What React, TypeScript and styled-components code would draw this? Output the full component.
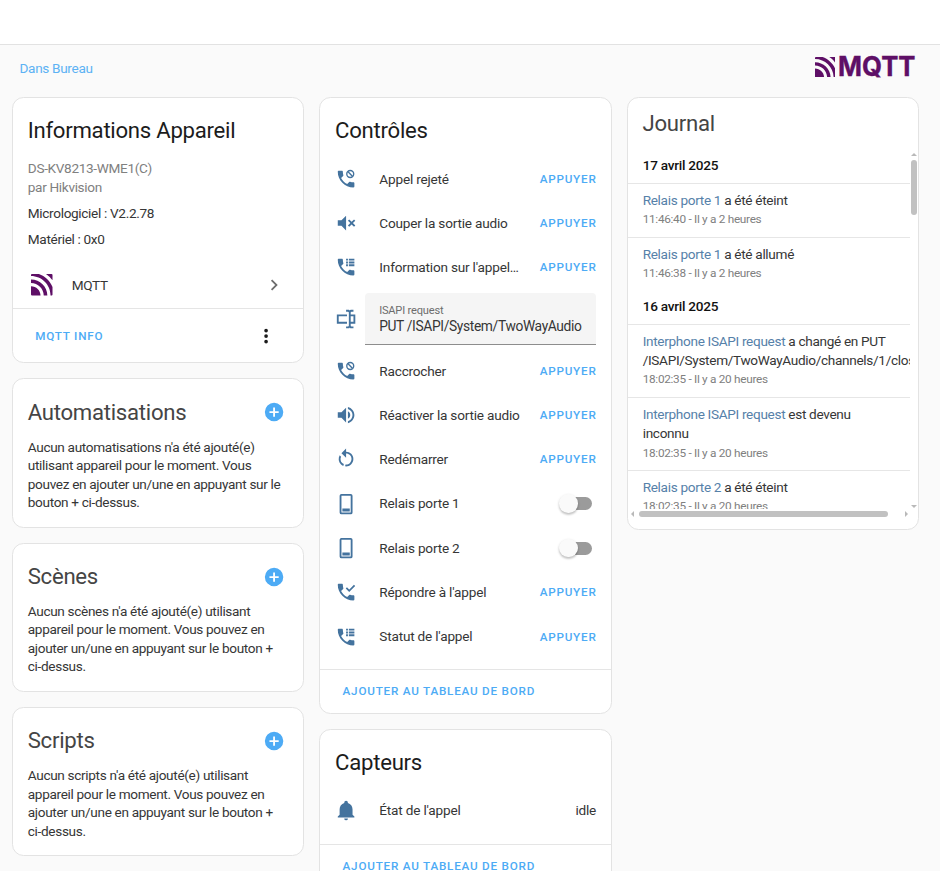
import React from "react";
import styled, { createGlobalStyle } from "styled-components";
import { SiMqtt } from "react-icons/si";

const GlobalStyle = createGlobalStyle`
  * { box-sizing: border-box; }
  html, body { margin: 0; height: 871px; overflow: hidden; background: #fafafa; }
  body { font-family: Roboto, "Liberation Sans", sans-serif; font-size: 13.6px; letter-spacing: -0.33px; line-height: 18.47px; color: #363636; }
  #root { height: 100%; }
  button { font: inherit; border: 0; background: none; padding: 0; }
`;

const Page = styled.div`
  height: 871px;
  overflow: hidden;
`;
const TopBar = styled.header`
  height: 45px;
  background: #fff;
  border-bottom: 1px solid #e2e2e2;
`;
const SubHeader = styled.div`
  display: flex;
  justify-content: space-between;
  align-items: center;
  height: 45px;
  margin-top: 1px;
  padding: 0 24.5px 0 19.5px;
`;
const AreaLink = styled.a`
  color: #5db2f4;
`;
const Brand = styled.div`
  display: flex;
  align-items: flex-start;
  height: 28px;
  color: #5e0f66;
  svg { display: block; flex: none; }
  > svg:first-child { margin: 2px 2.5px 0 0; }
`;
const Columns = styled.main`
  display: grid;
  grid-template-columns: repeat(3, 292.4px);
  gap: 15px;
  padding: 6px 0 0 12px;
  align-items: start;
`;
const Column = styled.div`
  display: flex;
  flex-direction: column;
  gap: 15px;
`;
const Card = styled.section<{ $height: number }>`
  height: ${(p) => p.$height}px;
  display: flex;
  flex-direction: column;
  background: #fff;
  border: 1px solid #e3e3e3;
  border-radius: 11.5px;
  overflow: hidden;
`;
const Title = styled.h1<{ $soft?: boolean; $top: number }>`
  margin: 0;
  padding: ${(p) => p.$top}px 15px 0 14.7px;
  font-size: 22.17px;
  line-height: 30px;
  font-weight: 400;
  letter-spacing: -0.27px;
  color: ${(p) => (p.$soft ? "#454545" : "#1c1c1c")};
`;
const TitleRow = styled.div`
  display: flex;
  align-items: flex-start;
  justify-content: space-between;
  svg { margin: 22px 18.6px 0 0; }
`;
const DeviceBody = styled.div`
  flex: 1;
  padding: 14.2px 15px 0 14.8px;
`;
const Muted = styled.div`
  color: #808080;
`;
const Detail = styled.div`
  margin-top: 7.4px;
`;
const IntegrationLink = styled.div`
  display: flex;
  align-items: center;
  height: 44.3px;
  margin-top: 14.8px;
  padding: 0 3px 0 3.7px;
  span { flex: 1; margin-left: 18.8px; }
`;
const Footer = styled.footer<{ $height: number }>`
  height: ${(p) => p.$height}px;
  flex: none;
  display: flex;
  align-items: center;
  justify-content: space-between;
  padding: 0 25.8px 0 22.2px;
  border-top: 1px solid #e5e5e5;
`;
const Action = styled.button`
  color: #4dabf5;
  font-size: 11.7px;
  line-height: 18px;
  font-weight: 500;
  letter-spacing: 0.78px;
  margin-right: -0.78px;
  white-space: nowrap;
`;
const Paragraph = styled.p`
  margin: 10.8px 20px 0 14.8px;
`;
const Rows = styled.div`
  flex: 1;
  display: flex;
  flex-direction: column;
  gap: 7.39px;
  padding: 14.9px 15px 0 14.8px;
`;
const Row = styled.div`
  flex: none;
  display: flex;
  align-items: center;
  height: 36.94px;
  > svg { flex: none; color: #44739e; }
`;
const Name = styled.span`
  flex: 1;
  margin-left: 22px;
  letter-spacing: -0.2px;
  white-space: nowrap;
`;
const InputRow = styled(Row)`
  height: 51.72px;
`;
const Field = styled.div`
  flex: 1;
  height: 51.72px;
  margin-left: 7.4px;
  padding: 10.4px 0 0 14.4px;
  background: #f5f5f5;
  border-bottom: 1px solid #8d8d8d;
  border-radius: 4px 4px 0 0;
  white-space: nowrap;
`;
const FieldLabel = styled.div`
  font-size: 11.1px;
  line-height: 14px;
  letter-spacing: -0.2px;
  color: #6d6d6d;
`;
const FieldValue = styled.div`
  font-size: 13.8px;
  line-height: 16px;
  letter-spacing: -0.36px;
`;
const Switch = styled.div`
  display: flex;
  align-items: center;
  width: 29.5px;
  height: 13px;
  margin-right: 3.6px;
  background: #9b9b9b;
  border-radius: 7px;
`;
const Knob = styled.div`
  width: 18.6px;
  height: 18.6px;
  margin-left: -3.6px;
  flex: none;
  border-radius: 50%;
  background: #fafafa;
  box-shadow: 0 2px 2px rgba(0, 0, 0, 0.15), 0 1px 3px rgba(0, 0, 0, 0.14);
`;
const LogFrame = styled.div`
  display: grid;
  grid-template: 358.8px 10px / 282px 8px;
  margin-top: 11.7px;
`;
const LogView = styled.div`
  overflow: hidden;
`;
const LogDate = styled.div`
  height: 33.3px;
  padding: 6.2px 15px 0 14.9px;
  line-height: 18px;
  font-weight: 500;
  letter-spacing: -0.26px;
  color: #111;
`;
const LogEntry = styled.div`
  padding: 6.5px 0 7.4px 14.9px;
  border-top: 1px solid #e6e6e6;
  line-height: 19.4px;
  letter-spacing: -0.32px;
  white-space: nowrap;
  a { color: #5681a9; }
`;
const LogTime = styled.div`
  font-size: 11.8px;
  letter-spacing: -0.3px;
  color: #808080;
`;
const Track = styled.div<{ $horizontal?: boolean }>`
  display: flex;
  flex-direction: ${(p) => (p.$horizontal ? "row" : "column")};
  align-items: center;
  justify-content: space-between;
  color: #b9b9b9;
  padding: ${(p) => (p.$horizontal ? "0 2px 0 3px" : "3px 0 1px")};
  svg { display: block; flex: none; }
`;
const Thumb = styled.div<{ $horizontal?: boolean }>`
  width: ${(p) => (p.$horizontal ? "249px" : "6px")};
  height: ${(p) => (p.$horizontal ? "6px" : "55px")};
  margin: ${(p) => (p.$horizontal ? "0 auto 0 5px" : "4px 0 auto")};
  background: #c1c1c1;
  border-radius: 3px;
`;

const HANDSET =
  "M20 15.5C18.8 15.5 17.5 15.3 16.4 14.9C16.3 14.9 16.2 14.9 16.1 14.9C15.8 14.9 15.6 15 15.4 15.2L13.2 17.4C10.4 15.9 8 13.6 6.6 10.8L8.8 8.6C9.1 8.3 9.2 7.9 9 7.6C8.7 6.5 8.5 5.2 8.5 4C8.5 3.5 8 3 7.5 3H4C3.5 3 3 3.5 3 4C3 13.4 10.6 21 20 21C20.5 21 21 20.5 21 20V16.5C21 16 20.5 15.5 20 15.5Z";

const ICONS: Record<string, string> = {
  mute: "M3,9H7L12,4V20L7,15H3V9M16.59,12L14,9.41L15.41,8L18,10.59L20.59,8L22,9.41L19.41,12L22,14.59L20.59,16L18,13.41L15.41,16L14,14.59L16.59,12Z",
  volume: "M14,3.23V5.29C16.89,6.15 19,8.83 19,12C19,15.17 16.89,17.84 14,18.7V20.77C18,19.86 21,16.28 21,12C21,7.72 18,4.14 14,3.23M16.5,12C16.5,10.23 15.5,8.71 14,7.97V16C15.5,15.29 16.5,13.76 16.5,12M3,9V15H7L12,20V4L7,9H3Z",
  log: HANDSET + "M12 3V5H14V3ZM15 3V5H21V3ZM12 6V8H14V6ZM15 6V8H21V6ZM12 9V11H14V9ZM15 9V11H21V9Z",
  textbox: "M17,7H22V17H17V19A1,1 0 0,0 18,20H20V22H17.5C16.95,22 16,21.55 16,21C16,21.55 15.05,22 14.5,22H12V20H14A1,1 0 0,0 15,19V5A1,1 0 0,0 14,4H12V2H14.5C15.05,2 16,2.45 16,3C16,2.45 16.95,2 17.5,2H20V4H18A1,1 0 0,0 17,5V7M2,7H13V9H4V15H13V17H2V7M20,15V9H17V15H20Z",
  restart: "M12,4C14.1,4 16.1,4.8 17.6,6.3C20.7,9.4 20.7,14.5 17.6,17.6C15.8,19.5 13.3,20.2 10.9,19.9L11.4,17.9C13.1,18.1 14.9,17.5 16.2,16.2C18.5,13.9 18.5,10.1 16.2,7.7C15.1,6.6 13.5,6 12,6V10.6L7,5.6L12,0.6V4M6.3,17.6C3.7,15 3.3,11 5.1,7.9L6.6,9.4C5.5,11.6 5.9,14.4 7.8,16.2C8.3,16.7 8.9,17.1 9.6,17.4L9,19.4C8,19 7.1,18.4 6.3,17.6Z",
  relay: "M7 1H17A2 2 0 0 1 19 3V21A2 2 0 0 1 17 23H7A2 2 0 0 1 5 21V3A2 2 0 0 1 7 1ZM7 3V21H17V3ZM8 16.8H16V20H8Z",
  bell: "M21,19V20H3V19L5,17V11C5,7.9 7.03,5.17 10,4.29C10,4.19 10,4.1 10,4A2,2 0 0,1 12,2A2,2 0 0,1 14,4C14,4.1 14,4.19 14,4.29C16.97,5.17 19,7.9 19,11V17L21,19M14,21A2,2 0 0,1 12,23A2,2 0 0,1 10,21",
  plus: "M17,13H13V17H11V13H7V11H11V7H13V11H17M12,2A10,10 0 0,0 2,12A10,10 0 0,0 12,22A10,10 0 0,0 22,12A10,10 0 0,0 12,2Z",
  chevron: "M8.59,16.58L13.17,12L8.59,7.41L10,6L16,12L10,18L8.59,16.58Z",
  dots: "M12,16A2,2 0 0,1 14,18A2,2 0 0,1 12,20A2,2 0 0,1 10,18A2,2 0 0,1 12,16M12,10A2,2 0 0,1 14,12A2,2 0 0,1 12,14A2,2 0 0,1 10,12A2,2 0 0,1 12,10M12,4A2,2 0 0,1 14,6A2,2 0 0,1 12,8A2,2 0 0,1 10,6A2,2 0 0,1 12,4Z",
};

function Icon({ name, color }: { name: string; color?: string }) {
  return (
    <svg width="22.17" height="22.17" viewBox="0 0 24 24" fill="currentColor" color={color}>
      {name === "cancel" || name === "check" ? <path d={HANDSET} /> : <path d={ICONS[name]} fillRule="evenodd" />}
      {name === "cancel" && (
        <g fill="none" stroke="currentColor" strokeWidth="1.5">
          <circle cx="16.5" cy="6.5" r="3.75" />
          <path d="M13.9 3.9L19.1 9.1" />
        </g>
      )}
      {name === "check" && <path d="M12.3 7.5L15.4 10.6L21.2 4.8" fill="none" stroke="currentColor" strokeWidth="1.9" />}
    </svg>
  );
}

function Arrow({ points, w, h }: { points: string; w: number; h: number }) {
  return (
    <svg width={w} height={h} viewBox={`0 0 ${w} ${h}`}>
      <polygon points={points} fill="currentColor" />
    </svg>
  );
}

const controls: { icon: string; name: string; kind?: "switch" | "input" }[] = [
  { icon: "cancel", name: "Appel rejeté" },
  { icon: "mute", name: "Couper la sortie audio" },
  { icon: "log", name: "Information sur l'appel…" },
  { icon: "textbox", name: "ISAPI request", kind: "input" },
  { icon: "cancel", name: "Raccrocher" },
  { icon: "volume", name: "Réactiver la sortie audio" },
  { icon: "restart", name: "Redémarrer" },
  { icon: "relay", name: "Relais porte 1", kind: "switch" },
  { icon: "relay", name: "Relais porte 2", kind: "switch" },
  { icon: "check", name: "Répondre à l'appel" },
  { icon: "log", name: "Statut de l'appel" },
];

const related = [
  { title: "Automatisations", text: "Aucun automatisations n'a été ajouté(e) utilisant appareil pour le moment. Vous pouvez en ajouter un/une en appuyant sur le bouton + ci-dessus." },
  { title: "Scènes", text: "Aucun scènes n'a été ajouté(e) utilisant appareil pour le moment. Vous pouvez en ajouter un/une en appuyant sur le bouton + ci-dessus." },
  { title: "Scripts", text: "Aucun scripts n'a été ajouté(e) utilisant appareil pour le moment. Vous pouvez en ajouter un/une en appuyant sur le bouton + ci-dessus." },
];

const log = [
  {
    date: "17 avril 2025",
    entries: [
      { who: "Relais porte 1", lines: [" a été éteint"], time: "11:46:40 - Il y a 2 heures" },
      { who: "Relais porte 1", lines: [" a été allumé"], time: "11:46:38 - Il y a 2 heures" },
    ],
  },
  {
    date: "16 avril 2025",
    entries: [
      { who: "Interphone ISAPI request", lines: [" a changé en PUT", "/ISAPI/System/TwoWayAudio/channels/1/close"], time: "18:02:35 - Il y a 20 heures" },
      { who: "Interphone ISAPI request", lines: [" est devenu", "inconnu"], time: "18:02:35 - Il y a 20 heures" },
      { who: "Relais porte 2", lines: [" a été éteint"], time: "18:02:35 - Il y a 20 heures" },
    ],
  },
];

function ControlRow({ icon, name, kind }: (typeof controls)[number]) {
  if (kind === "input") {
    return (
      <InputRow>
        <Icon name={icon} />
        <Field>
          <FieldLabel>{name}</FieldLabel>
          <FieldValue>PUT /ISAPI/System/TwoWayAudio</FieldValue>
        </Field>
      </InputRow>
    );
  }
  return (
    <Row>
      <Icon name={icon} />
      <Name>{name}</Name>
      {kind === "switch" ? <Switch><Knob /></Switch> : <Action>APPUYER</Action>}
    </Row>
  );
}

export default function App() {
  return (
    <Page>
      <GlobalStyle />
      <TopBar />
      <SubHeader>
        <AreaLink>Dans Bureau</AreaLink>
        <Brand>
          <SiMqtt size={20.5} />
          <svg width="78" height="34" viewBox="0 0 78 34">
            <text x="0" y="21.3" fontFamily="Inter, sans-serif" fontWeight="700" fontSize="26.5" textLength="77.5" lengthAdjust="spacingAndGlyphs" letterSpacing="0" fill="currentColor" stroke="currentColor" strokeWidth="0.4">MQTT</text>
          </svg>
        </Brand>
      </SubHeader>
      <Columns>
        <Column>
          <Card $height={266.4}>
            <Title $top={17.2}>Informations Appareil</Title>
            <DeviceBody>
              <Muted>DS-KV8213-WME1(C)</Muted>
              <Muted>par Hikvision</Muted>
              <Detail>Micrologiciel : V2.2.78</Detail>
              <Detail>Matériel : 0x0</Detail>
              <IntegrationLink>
                <SiMqtt size={21.5} color="#5e0f66" />
                <span>MQTT</span>
                <Icon name="chevron" color="#6f6f6f" />
              </IntegrationLink>
            </DeviceBody>
            <Footer $height={54.5}>
              <Action>MQTT INFO</Action>
              <Icon name="dots" color="#1c1c1c" />
            </Footer>
          </Card>
          {related.map((r) => (
            <Card $height={149.3} key={r.title}>
              <TitleRow>
                <Title $top={17.5} $soft>{r.title}</Title>
                <Icon name="plus" color="#4dabf5" />
              </TitleRow>
              <Paragraph>{r.text}</Paragraph>
            </Card>
          ))}
        </Column>
        <Column>
          <Card $height={616.6}>
            <Title $top={17.4}>Contrôles</Title>
            <Rows>{controls.map((c) => <ControlRow key={c.name} {...c} />)}</Rows>
            <Footer $height={43.5}><Action>AJOUTER AU TABLEAU DE BORD</Action></Footer>
          </Card>
          <Card $height={160}>
            <Title $top={17.6}>Capteurs</Title>
            <Rows>
              <Row>
                <Icon name="bell" />
                <Name>État de l'appel</Name>
                <span>idle</span>
              </Row>
            </Rows>
            <Footer $height={43.5}><Action>AJOUTER AU TABLEAU DE BORD</Action></Footer>
          </Card>
        </Column>
        <Card $height={433}>
          <Title $top={10.4} $soft>Journal</Title>
          <LogFrame>
            <LogView>
              {log.map((day) => (
                <React.Fragment key={day.date}>
                  <LogDate>{day.date}</LogDate>
                  {day.entries.map((e, i) => (
                    <LogEntry key={i}>
                      <div><a>{e.who}</a>{e.lines[0]}</div>
                      {e.lines[1] && <div>{e.lines[1]}</div>}
                      <LogTime>{e.time}</LogTime>
                    </LogEntry>
                  ))}
                </React.Fragment>
              ))}
            </LogView>
            <Track>
              <Arrow w={6} h={3} points="0,3 3,0 6,3" />
              <Thumb />
              <Arrow w={6} h={3} points="0,0 3,3 6,0" />
            </Track>
            <Track $horizontal>
              <Arrow w={3} h={6} points="3,0 0,3 3,6" />
              <Thumb $horizontal />
              <Arrow w={3} h={6} points="0,0 3,3 0,6" />
            </Track>
          </LogFrame>
        </Card>
      </Columns>
    </Page>
  );
}
